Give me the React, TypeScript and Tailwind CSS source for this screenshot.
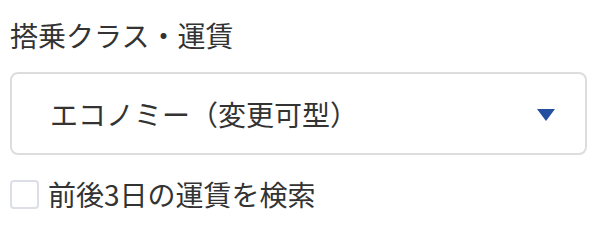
const FONT = "font-['Noto_Sans_CJK_JP','Noto_Sans',sans-serif]";

export default function App() {
  return (
    <div className={`w-[602px] h-[226px] bg-white text-[#333] ${FONT}`}>
      <div className="pl-[10px] pr-[15px] pt-[15px]">
        <label className="block text-[28px] leading-[40px]">搭乗クラス・運賃</label>

        <div className="mt-[17px] h-[83px] flex items-center justify-between rounded-[8px] border-2 border-[#dddddd] pl-[38px] pr-[30px]">
          <span className="text-[28px] leading-[40px]">エコノミー（変更可型）</span>
          <svg width="18" height="12" viewBox="0 0 18 12" className="mt-[3px]">
            <path d="M0 0 H18 L9 12 Z" fill="#24509f" />
          </svg>
        </div>

        <div className="mt-[19px] flex items-center gap-[9px]">
          <span className="w-[29px] h-[29px] rounded-[4px] border-2 border-[#dcdfe8] bg-white" />
          <span className="text-[28px] leading-[40px]">前後3日の運賃を検索</span>
        </div>
      </div>
    </div>
  );
}
